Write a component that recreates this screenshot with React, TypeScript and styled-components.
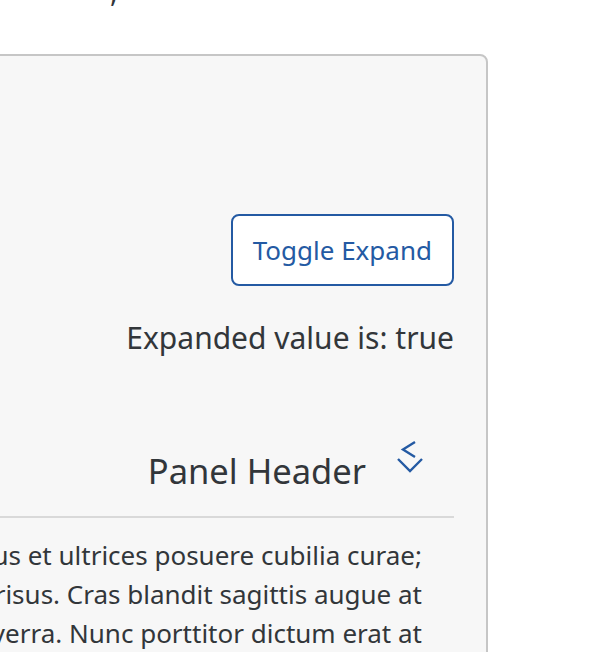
import { createGlobalStyle, styled } from 'styled-components';

const GlobalStyle = createGlobalStyle`
  html, body {
    margin: 0;
    padding: 0;
    background: #ffffff;
  }
  body {
    font-family: "Noto Sans", "Open Sans", sans-serif;
    color: #32363a;
  }
`;

const Page = styled.div`
  width: 616px;
  height: 652px;
  overflow: hidden;
  position: relative;
`;

// only the tail of a comma from the line above is in view
const Caption = styled.div`
  height: 79px;
  margin-top: -25px;
  padding-left: 110px;
  font-size: 28px;
  line-height: 32px;
  color: #32363a;
`;

const Panel = styled.section`
  margin-left: -900px;
  width: 1388px;
  box-sizing: border-box;
  background: #f7f7f7;
  border: 2px solid #c6c6c6;
  border-radius: 8px;
  padding: 0 32px 40px 32px;
  display: flex;
  flex-direction: column;
  align-items: flex-end;
`;

const ToggleButton = styled.button`
  margin-top: 158px;
  height: 72px;
  padding: 0 20px;
  box-sizing: border-box;
  background: #ffffff;
  border: 2px solid #245aa3;
  border-radius: 8px;
  color: #245aa3;
  font-family: "Noto Sans", sans-serif;
  font-size: 26px;
  cursor: pointer;
`;

const ValueText = styled.div`
  margin-top: 32px;
  font-size: 30px;
  line-height: 40px;
`;

const Header = styled.div`
  align-self: stretch;
  box-sizing: border-box;
  margin-top: 80px;
  height: 80px;
  display: flex;
  align-items: flex-start;
  justify-content: flex-end;
  gap: 30px;
  border-bottom: 2px solid #d9d9d9;
`;

const HeaderTitle = styled.h2`
  margin: 9px 0 0 0;
  font-size: 34.5px;
  line-height: 48px;
  font-weight: 400;
  color: #32363a;
`;

const ExpandIcon = styled.svg`
  width: 28px;
  height: 34px;
  margin: 2px 30px 0 0;
  color: #245aa3;
`;

const Body = styled.div`
  align-self: stretch;
  padding: 18px 32px 0 0;
  font-size: 26px;
  line-height: 39px;
`;

const Line = styled.div`
  display: flex;
  justify-content: flex-end;
  white-space: nowrap;
`;

const lines = [
  'Vestibulum ante ipsum primis in faucibus orci luctus et ultrices posuere cubilia curae;',
  'Donec ac tortor sed mi laoreet egestas non a risus. Cras blandit sagittis augue at',
  'Phasellus ut tortor et nisl consectetur viverra. Nunc porttitor dictum erat at',
  'pulvinar. Sed vitae enim ornare, sodales nibh quis, dapibus lorem.',
];

export default function App() {
  return (
    <Page>
      <GlobalStyle />
      <Caption>,</Caption>
      <Panel>
        <ToggleButton>Toggle Expand</ToggleButton>
        <ValueText>Expanded value is: true</ValueText>
        <Header>
          <HeaderTitle>Panel Header</HeaderTitle>
          <ExpandIcon viewBox="0 0 28 34" fill="none" stroke="currentColor" strokeWidth="2.4">
            <polyline points="19,2 7,9.5 19,17" />
            <polyline points="2,19 14,31 26,19" />
          </ExpandIcon>
        </Header>
        <Body>
          {lines.map((l) => (
            <Line key={l}>{l}</Line>
          ))}
        </Body>
      </Panel>
    </Page>
  );
}
